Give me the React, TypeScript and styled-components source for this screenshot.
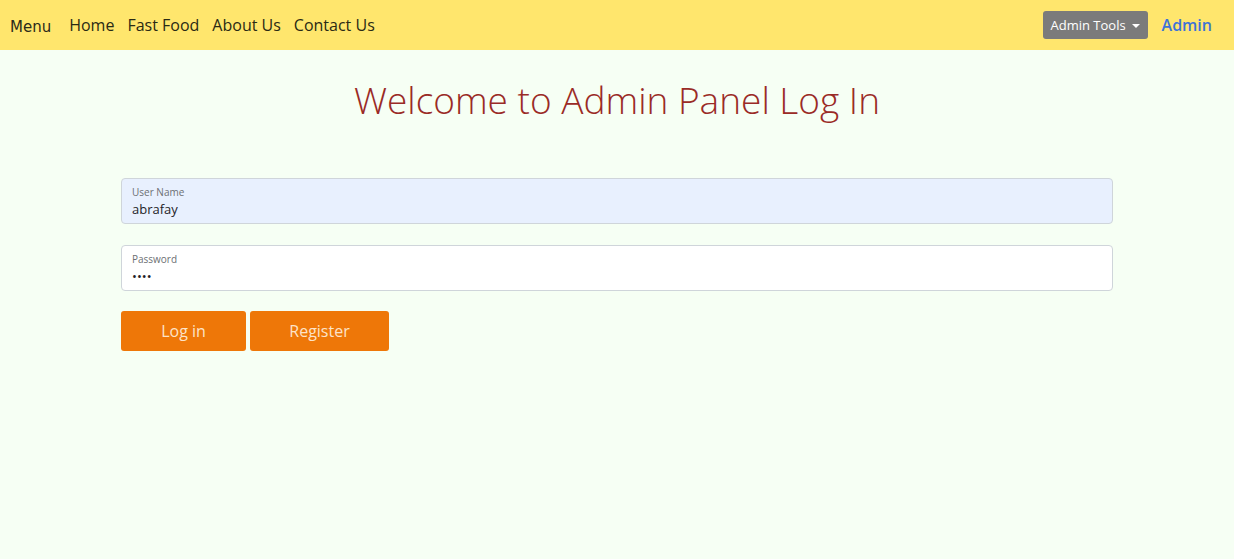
import React from "react";
import styled, { createGlobalStyle } from "styled-components";

const Global = createGlobalStyle`
  html, body { margin: 0; padding: 0; }
  body {
    background: #f6fff4;
    font-family: "Open Sans", "Noto Sans", "Liberation Sans", sans-serif;
    min-height: 559px;
  }
`;

const Nav = styled.nav`
  height: 50px;
  background: #ffe66d;
  display: flex;
  align-items: center;
  justify-content: space-between;
  padding: 0 22px 0 10px;
  box-sizing: border-box;
`;

const NavGroup = styled.div<{ $gap: number }>`
  display: flex;
  align-items: center;
  gap: ${(p) => p.$gap}px;
`;

const Brand = styled.span`
  font-family: "Comic Sans MS", "DejaVu Sans", sans-serif;
  font-size: 15px;
  color: #2b2a1a;
  margin-right: 5px;
  padding-top: 3px;
`;

const NavLink = styled.a`
  font-size: 16px;
  color: #2a2a14;
  text-decoration: none;
  font-weight: 500;
`;

const ToolsButton = styled.button`
  height: 28px;
  width: 105px;
  background: #7b7b7b;
  color: #fff;
  border: none;
  border-radius: 3px;
  font-family: inherit;
  font-size: 13px;
  display: flex;
  align-items: center;
  justify-content: center;
  gap: 6px;
  padding: 0;
`;

const Caret = styled.span`
  width: 0;
  height: 0;
  border-left: 4px solid transparent;
  border-right: 4px solid transparent;
  border-top: 4px solid #fff;
  margin-top: 1px;
`;

const AdminLink = styled.a`
  font-size: 16px;
  font-weight: 600;
  color: #3d73d8;
  text-decoration: none;
`;

const Title = styled.h1`
  margin: 26px 0 0;
  text-align: center;
  font-weight: 300;
  font-size: 37px;
  line-height: 48px;
  color: #9a2b26;
`;

const Form = styled.form`
  width: 992px;
  margin: 54px auto 0;
  display: flex;
  flex-direction: column;
`;

const Field = styled.div<{ $bg: string }>`
  height: 46px;
  box-sizing: border-box;
  border: 1px solid #cfd5da;
  border-radius: 4px;
  background: ${(p) => p.$bg};
  padding: 6px 10px 0;
  margin-bottom: 21px;
  display: flex;
  flex-direction: column;
`;

const Label = styled.label`
  font-size: 10px;
  line-height: 14px;
  color: #6c6f73;
`;

const Value = styled.span`
  font-size: 13px;
  line-height: 20px;
  color: #1f2428;
`;

const Buttons = styled.div`
  display: flex;
  gap: 4px;
  margin-top: -1px;
`;

const OrangeButton = styled.button<{ $w: number }>`
  width: ${(p) => p.$w}px;
  height: 40px;
  background: #ee7708;
  border: none;
  border-radius: 3px;
  color: #fde3c8;
  font-family: inherit;
  font-size: 16px;
  padding: 0;
`;

export default function App() {
  return (
    <>
      <Global />
      <Nav>
        <NavGroup $gap={13}>
          <Brand>Menu</Brand>
          <NavLink>Home</NavLink>
          <NavLink>Fast Food</NavLink>
          <NavLink>About Us</NavLink>
          <NavLink>Contact Us</NavLink>
        </NavGroup>
        <NavGroup $gap={14}>
          <ToolsButton>
            Admin Tools <Caret />
          </ToolsButton>
          <AdminLink>Admin</AdminLink>
        </NavGroup>
      </Nav>
      <Title>Welcome to Admin Panel Log In</Title>
      <Form>
        <Field $bg="#e8f0fe">
          <Label>User Name</Label>
          <Value>abrafay</Value>
        </Field>
        <Field $bg="#ffffff">
          <Label>Password</Label>
          <Value>••••</Value>
        </Field>
        <Buttons>
          <OrangeButton type="button" $w={125}>Log in</OrangeButton>
          <OrangeButton type="button" $w={139}>Register</OrangeButton>
        </Buttons>
      </Form>
    </>
  );
}
